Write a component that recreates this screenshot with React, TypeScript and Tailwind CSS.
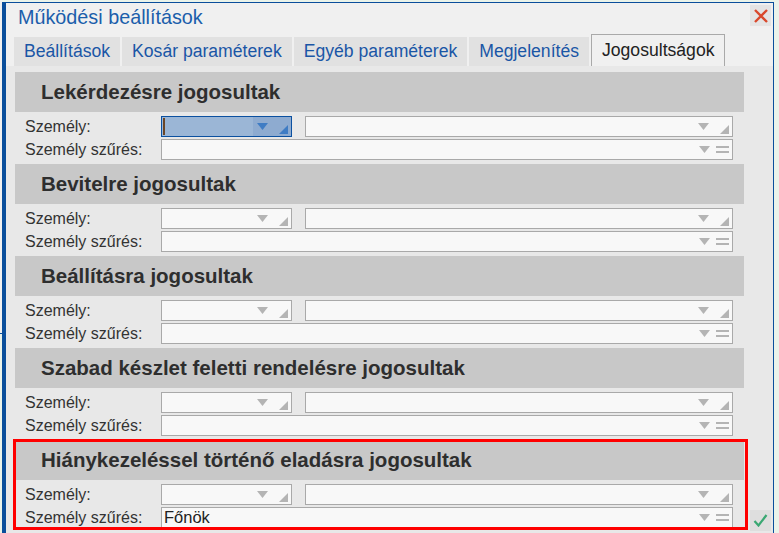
import React from "react";

const FONT = { fontFamily: '"Liberation Sans", Arial, sans-serif' };

function Tri({ color = "#b4b4b4" }: { color?: string }) {
  return (
    <svg width="11" height="7" viewBox="0 0 11 7" className="shrink-0">
      <polygon points="0,0 11,0 5.5,7" fill={color} />
    </svg>
  );
}

function Corner({ color = "#b4b4b4" }: { color?: string }) {
  return (
    <svg width="9" height="9" viewBox="0 0 9 9" className="shrink-0 self-end mb-[2px]">
      <polygon points="9,0 9,9 0,9" fill={color} />
    </svg>
  );
}

function Lines() {
  return (
    <svg width="13" height="8" viewBox="0 0 13 8" className="shrink-0">
      <rect x="0" y="0" width="13" height="2" fill="#b4b4b4" />
      <rect x="0" y="5" width="13" height="2" fill="#b4b4b4" />
    </svg>
  );
}

function Field({
  w,
  kind,
  focused,
  text,
}: {
  w: string;
  kind: "corner" | "lines";
  focused?: boolean;
  text?: string;
}) {
  if (focused) {
    return (
      <div className={`${w} h-[21px] flex items-stretch border border-[#0b50a0] bg-[#9bb6d6]`}>
        <div className="flex-1 flex items-center pl-[1px]">
          <div className="w-[2px] h-[17px] bg-[#6b4626]" />
        </div>
        <div className="w-[38px] flex items-center bg-[#8eabd0] pl-[4px] pr-[3px]">
          <Tri color="#3f7cc4" />
          <div className="flex-1" />
          <Corner color="#3f7cc4" />
        </div>
      </div>
    );
  }
  return (
    <div className={`${w} h-[21px] flex items-center border border-[#a9a9a9] bg-[#f8f8f8] pr-[3px]`}>
      <div className="flex-1 pl-[2px] text-[16.5px] text-[#222] leading-none">{text}</div>
      <Tri />
      {kind === "corner" ? (
        <div className="ml-[11px] flex self-stretch">
          <Corner />
        </div>
      ) : (
        <div className="ml-[6px] flex items-center">
          <Lines />
        </div>
      )}
    </div>
  );
}

function Section({
  title,
  focused,
  filter,
}: {
  title: string;
  focused?: boolean;
  filter?: string;
}) {
  return (
    <div className="w-[729px] h-[92px] flex flex-col">
      <div className="h-[40px] bg-[#c8c8c8] flex items-center pl-[26px] text-[20.5px] font-bold text-[#2e2e2e]">
        {title}
      </div>
      <div className="flex flex-col gap-[2px] pt-[4px] pl-[10px] pr-[11px]">
        <div className="flex items-center h-[21px]">
          <div className="w-[136px] text-[16px] text-[#333]">Személy:</div>
          <Field w="w-[131px]" kind="corner" focused={focused} />
          <div className="w-[13px]" />
          <Field w="w-[428px]" kind="corner" />
        </div>
        <div className="flex items-center h-[21px]">
          <div className="w-[136px] text-[16px] text-[#333]">Személy szűrés:</div>
          <Field w="w-[572px]" kind="lines" text={filter} />
        </div>
      </div>
    </div>
  );
}

const tabs = ["Beállítások", "Kosár paraméterek", "Egyéb paraméterek", "Megjelenítés"];

export default function App() {
  return (
    <div className="w-[779px] h-[533px] overflow-hidden bg-[#eaf3ea] relative" style={FONT}>
      <div className="absolute left-0 top-0 w-[2px] h-[334px] bg-[#f0f0f0] border-b border-[#0a4e9b]" />
      <div className="ml-[2px] mt-[2px] w-[772px] h-[531px] border-l-4 border-t border-r border-[#0a4e9b] bg-[#f0f0f0] flex flex-col relative">
        <div className="h-[31px] flex items-start justify-between pl-[12px] pr-[2px]">
          <div className="text-[19.8px] text-[#1b5eab] mt-[4px] leading-none pt-[1px]">Működési beállítások</div>
          <div className="w-[21px] h-[21px] mt-[2px] bg-[#e4e4e4] flex items-center justify-center">
            <svg width="14" height="14" viewBox="0 0 14 14">
              <path d="M1 1 L13 13 M13 1 L1 13" stroke="#d9482c" strokeWidth="2.4" />
            </svg>
          </div>
        </div>
        <div className="h-[32px] flex items-end pl-[8px] gap-[2px]">
          {tabs.map((t) => (
            <div
              key={t}
              className="h-[29px] px-[10px] bg-[#e1e1e1] flex items-center text-[17.6px] text-[#1a56a6]"
            >
              {t}
            </div>
          ))}
          <div className="h-[32px] px-[10px] bg-[#f0f0f0] border-t border-l border-r border-[#a9a9a9] flex items-center text-[17.6px] text-[#222]">
            Jogosultságok
          </div>
        </div>
        <div className="flex-1 bg-[#e8e8e8] pt-[6px] pl-[9px] flex flex-col">
          <Section title="Lekérdezésre jogosultak" focused />
          <Section title="Bevitelre jogosultak" />
          <Section title="Beállításra jogosultak" />
          <Section title="Szabad készlet feletti rendelésre jogosultak" />
          <div className="relative">
            <Section title="Hiánykezeléssel történő eladásra jogosultak" filter="Főnök" />
            <div className="absolute left-[-2px] top-[-1px] w-[735px] h-[91px] border-[3px] border-[#ff0000]" />
          </div>
        </div>
        <div className="absolute right-[2px] top-[507px] w-[21px] h-[21px] bg-[#dedede] flex items-center justify-center">
          <svg width="15" height="13" viewBox="0 0 15 13">
            <path d="M1.5 7 L5.5 11.5 L13.5 1" fill="none" stroke="#3aa873" strokeWidth="2.2" />
          </svg>
        </div>
      </div>
    </div>
  );
}
